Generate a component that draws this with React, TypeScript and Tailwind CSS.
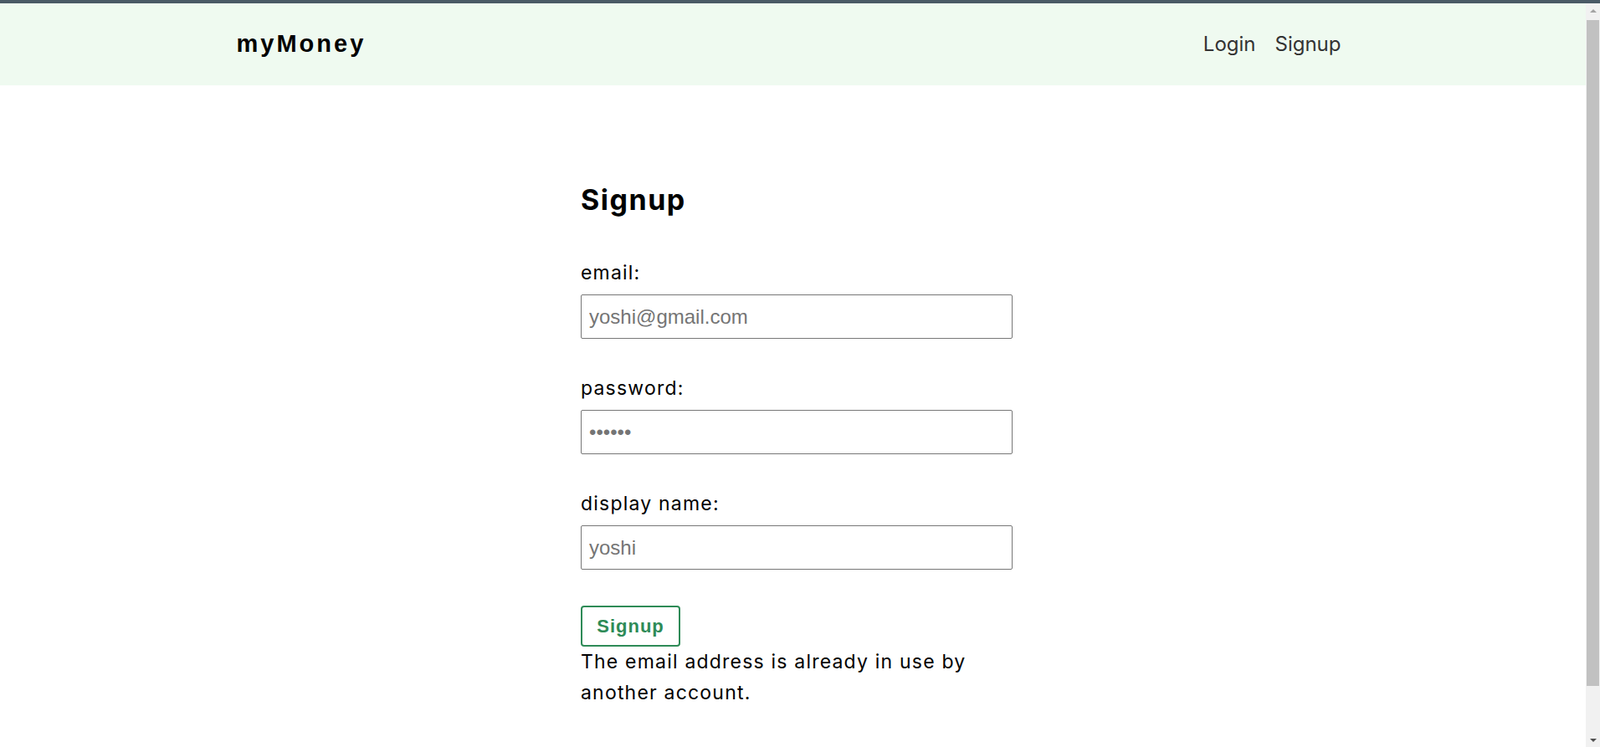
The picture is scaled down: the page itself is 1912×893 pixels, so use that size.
import React from "react"

const Navbar = () => {
	return (
		<nav className="bg-[#effaf0]">
			<div className="max-w-[1330px] mx-auto pr-[10px] h-[98px] flex items-center justify-between">
				<span className="font-['Liberation_Sans',Arial,sans-serif] font-bold text-[29px] tracking-[3px] text-black">
					myMoney
				</span>
				<div className="flex items-center gap-[23px] font-['Inter',sans-serif] text-[24px] text-[#333]">
					<a href="#">Login</a>
					<a href="#">Signup</a>
				</div>
			</div>
		</nav>
	)
}

interface FieldProps {
	label: string
	type: string
	placeholder: string
}

const Field = ({ label, type, placeholder }: FieldProps) => {
	return (
		<label className="block mb-[41px]">
			<span className="block leading-[36px] text-[23px] tracking-[1.2px] mb-[8px]">{label}</span>
			<input
				type={type}
				placeholder={placeholder}
				className="block w-full h-[53px] px-[9px] border border-[#777] rounded-[2px] font-['Liberation_Sans',Arial,sans-serif] text-[24px] text-black placeholder:text-[#757575] outline-none"
			/>
		</label>
	)
}

const Signup = () => {
	return (
		<form
			className="w-[525px] mx-auto pl-[9px] pt-[117px] pb-[56px] font-['Inter',sans-serif] text-black"
			onSubmit={(e) => e.preventDefault()}
		>
			<h2 className="text-[34px] font-bold leading-[40px] tracking-[1.5px] mb-[49px]">Signup</h2>
			<Field label="email:" type="email" placeholder="yoshi@gmail.com" />
			<Field label="password:" type="text" placeholder="••••••" />
			<Field label="display name:" type="text" placeholder="yoshi" />
			<button
				type="submit"
				className="mt-[2px] w-[119px] h-[49px] border-2 border-[#2e8b57] rounded-[4px] bg-white text-[#2e8b57] font-['Liberation_Sans',Arial,sans-serif] font-bold text-[22px] tracking-[1px]"
			>
				Signup
			</button>
			<p className="text-[23px] leading-[37px] tracking-[1.2px]">
				The email address is already in use by another account.
			</p>
		</form>
	)
}

// the browser's scrollbar, as it shows in the screenshot
const Scrollbar = () => {
	return (
		<aside className="w-[17px] bg-[#f1f1f1] flex flex-col">
			<div className="h-[17px] flex items-center justify-center">
				<div className="w-0 h-0 border-x-[4px] border-x-transparent border-b-[4px] border-b-[#a3a3a3]" />
			</div>
			<div className="mt-[3px] h-[796px] mx-[1px] bg-[#c1c1c1]" />
			<div className="flex-1" />
			<div className="h-[17px] flex items-center justify-center">
				<div className="w-0 h-0 border-x-[4px] border-x-transparent border-t-[4px] border-t-[#505050]" />
			</div>
		</aside>
	)
}

export default function App() {
	return (
		<div className="h-screen flex flex-col overflow-hidden bg-white">
			<div className="h-[4px] bg-[#4a5a66]" />
			<div className="flex flex-1 min-h-0">
				<main className="flex-1 overflow-hidden">
					<Navbar />
					<Signup />
				</main>
				<Scrollbar />
			</div>
		</div>
	)
}
